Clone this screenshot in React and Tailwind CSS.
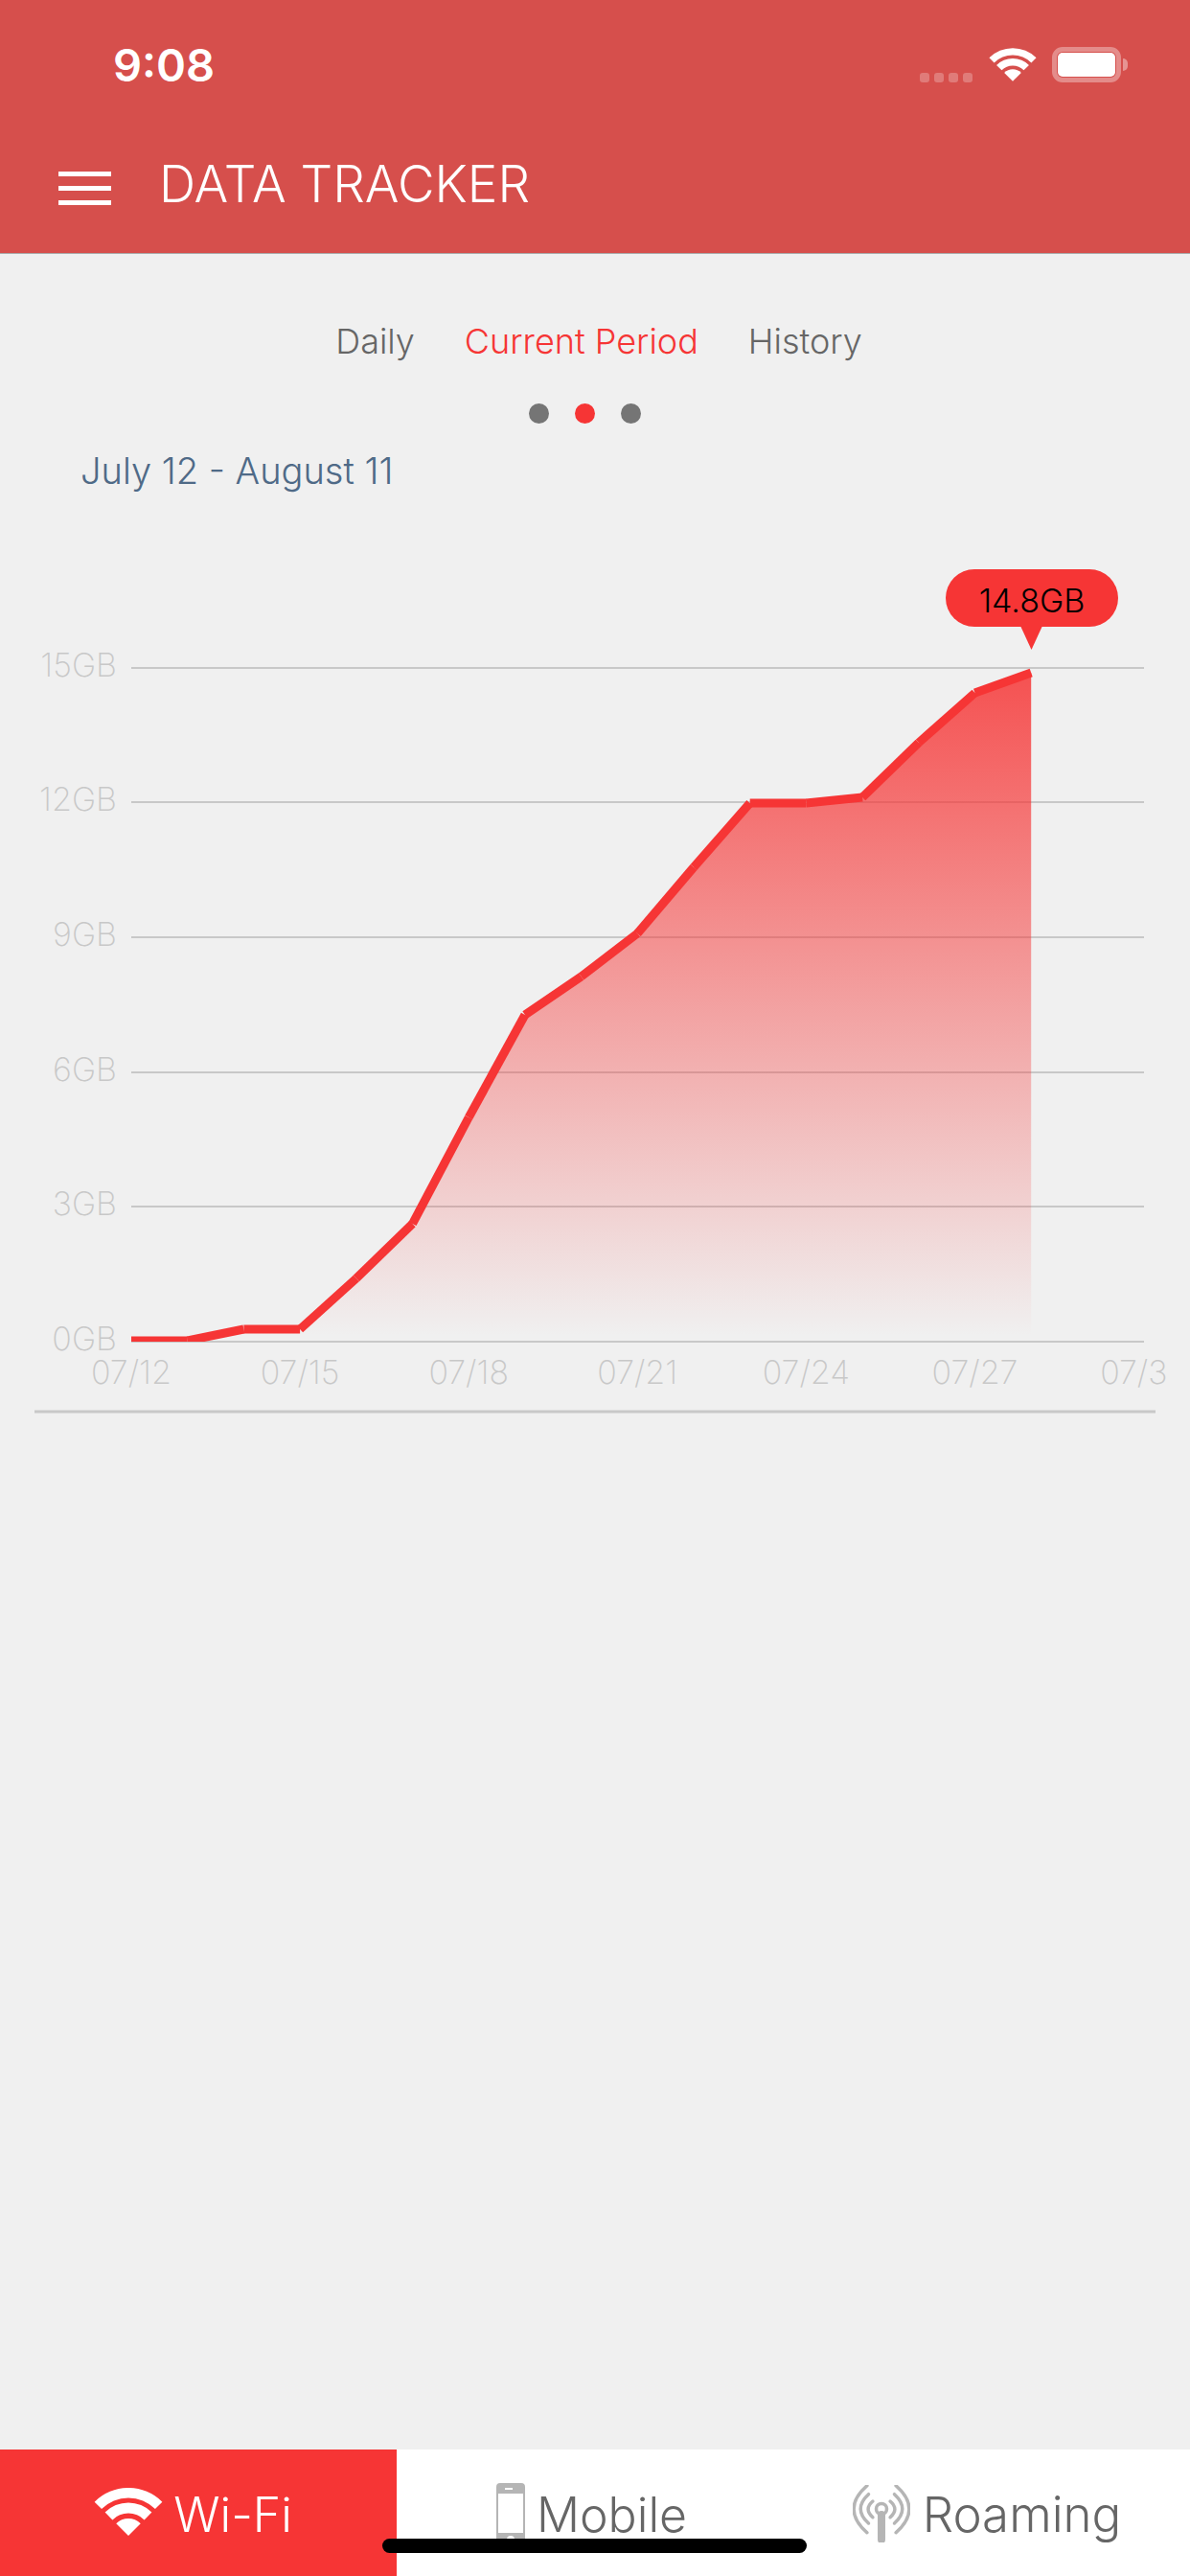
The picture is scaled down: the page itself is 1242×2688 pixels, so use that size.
import React from 'react';

const DAY = 58.7;
const X0 = 137;
const usage = [1400, 1400, 1388, 1388, 1335, 1278, 1167, 1060, 1020, 975, 906, 839, 839, 833, 776, 724, 703];
const points = usage.map((y, i) => [X0 + DAY * i, y]);
const line = points.map(([x, y]) => `${x},${y}`).join(' ');
const area = `${line} ${points[16][0]},1401 ${X0},1401`;

const yTicks = [
  { label: '15GB', y: 698 },
  { label: '12GB', y: 838 },
  { label: '9GB', y: 979 },
  { label: '6GB', y: 1120 },
  { label: '3GB', y: 1260 },
  { label: '0GB', y: 1401 },
];
const xTicks = ['07/12', '07/15', '07/18', '07/21', '07/24', '07/27', '07/30'];

const font = { fontFamily: 'Inter' };

function UsageChart() {
  return (
    <svg viewBox="0 560 1242 930" className="block w-full h-[930px]">
      <defs>
        <linearGradient id="fill" x1="0" y1="702" x2="0" y2="1395" gradientUnits="userSpaceOnUse">
          <stop offset="0" stopColor="#f63535" stopOpacity="0.85" />
          <stop offset="1" stopColor="#f63535" stopOpacity="0" />
        </linearGradient>
        <clipPath id="axis">
          <rect x="0" y="1400" width="1217" height="60" />
        </clipPath>
        <clipPath id="plot">
          <rect x="137" y="600" width="1057" height="801" />
        </clipPath>
      </defs>
      {yTicks.map((t) => (
        <g key={t.label}>
          <line x1={137} x2={1194} y1={t.y} y2={t.y} stroke="#c8c8c8" strokeWidth="2" />
          <text x={122} y={t.y + 9} textAnchor="end" fontSize="34" fontWeight="200" fill="#c8c8c8" style={font}>{t.label}</text>
        </g>
      ))}
      <g clipPath="url(#axis)">
        {xTicks.map((t, i) => (
          <text key={t} x={X0 + DAY * 3 * i} y={1445} textAnchor="middle" fontSize="34" fontWeight="200" fill="#c8c8c8" style={font}>{t}</text>
        ))}
      </g>
      <polygon points={area} fill="url(#fill)" />
      {/* each day is its own segment, so the corners stay unjoined */}
      <g clipPath="url(#plot)">
        {points.slice(1).map(([x, y], i) => (
          <line key={x} x1={points[i][0]} y1={points[i][1]} x2={x} y2={y} stroke="#f63535" strokeWidth="9" />
        ))}
      </g>
      <rect x="987" y="595" width="180" height="60" rx="30" fill="#f63535" />
      <polygon points="1065,654 1088,654 1076.5,679" fill="#f63535" />
      <text x="1077" y="640" textAnchor="middle" fontSize="34" fontWeight="300" fill="#000" style={font}>14.8GB</text>
      <line x1={36} x2={1206} y1={1474} y2={1474} stroke="#c8c8c8" strokeWidth="3" />
    </svg>
  );
}

function WifiIcon({ className }) {
  return (
    <svg viewBox="0 0 72 50" className={className} fill="currentColor">
      <path d="M0.64 14.64 A50 50 0 0 1 71.36 14.64 L63.93 22.07 A39.5 39.5 0 0 0 8.07 22.07 Z" />
      <path d="M11.6 25.6 A34.5 34.5 0 0 1 60.4 25.6 L52.6 33.4 A23.5 23.5 0 0 0 19.4 33.4 Z" />
      <path d="M23.27 37.27 A18 18 0 0 1 48.73 37.27 L36 50 Z" />
    </svg>
  );
}

function PhoneIcon() {
  return (
    <svg viewBox="0 0 30 70" className="w-[30px] h-[70px] text-[#b5b5b5]">
      <path fill="currentColor" fillRule="evenodd" d="M4 0 H26 A4 4 0 0 1 30 4 V66 A4 4 0 0 1 26 70 H4 A4 4 0 0 1 0 66 V4 A4 4 0 0 1 4 0 Z M2 11 V52 H28 V11 Z" />
      <rect x="9" y="5" width="8" height="2" fill="#fff" />
      <circle cx="15" cy="59" r="4" fill="#fff" />
    </svg>
  );
}

function AntennaIcon() {
  return (
    <svg viewBox="0 0 59 60" className="w-[60px] h-[60px] text-[#b5b5b5]" fill="none" stroke="currentColor" strokeWidth="3.5" strokeLinecap="round">
      <circle cx="29.5" cy="25" r="5.5" />
      <path d="M29.5 31 V57" strokeWidth="8" />
      <path d="M20.4 17 Q10.8 25 20.4 33.7 M38.6 17 Q48.2 25 38.6 33.7" />
      <path d="M16 9.7 Q-0.6 25 16 40 M43 9.7 Q59.6 25 43 40" />
      <path d="M14.4 0.8 Q-13.2 25 14.4 49.7 M44.6 0.8 Q72.2 25 44.6 49.7" />
    </svg>
  );
}

export default function App() {
  return (
    <div className="relative flex flex-col h-[2688px] bg-[#f0f0f0] overflow-hidden font-['Inter',sans-serif] font-light">
      {/* status bar and title */}
      <header className="h-[265px] bg-[#d64f4c] border-b border-[#aaa] text-white">
        <div className="flex items-start h-[150px] pt-[44px] pl-[118px] pr-[65px]">
          <span className="text-[47px] font-semibold leading-none">9:08</span>
          <div className="ml-auto flex items-center mt-[5px]">
            <div className="flex gap-[5px] mt-[26px] mr-[17px]">
              <span className="w-[10px] h-[10px] rounded-[3px] bg-white/25" />
              <span className="w-[10px] h-[10px] rounded-[3px] bg-white/25" />
              <span className="w-[10px] h-[10px] rounded-[3px] bg-white/25" />
              <span className="w-[10px] h-[10px] rounded-[3px] bg-white/25" />
            </div>
            <WifiIcon className="w-[50px] h-[35px]" />
            <div className="ml-[16px] w-[72px] h-[37px] rounded-[11px] border-[5px] border-white/35 p-px">
              <div className="w-full h-full rounded-[5px] bg-white" />
            </div>
            <span className="ml-[2px] w-[5px] h-[13px] rounded-r-full bg-white/40" />
          </div>
        </div>
        <div className="flex items-center h-[84px] pl-[61px]">
          <div className="flex flex-col gap-[10px] mt-[9px]">
            <span className="w-[55px] h-[5px] bg-white" />
            <span className="w-[55px] h-[5px] bg-white" />
            <span className="w-[55px] h-[5px] bg-white" />
          </div>
          <h1 className="ml-[50px] text-[53px] leading-[64px] font-light">DATA TRACKER</h1>
        </div>
      </header>

      {/* period tabs */}
      <nav className="flex justify-center gap-[52px] mt-[69px] pl-[8px] text-[36px] leading-[44px] text-[#666]">
        <span>Daily</span>
        <span className="text-[#f63535]">Current Period</span>
        <span>History</span>
      </nav>
      <div className="flex justify-center gap-[27px] mt-[43px] pr-[22px]">
        <span className="w-[21px] h-[21px] rounded-full bg-[#757575]" />
        <span className="w-[21px] h-[21px] rounded-full bg-[#f63535]" />
        <span className="w-[21px] h-[21px] rounded-full bg-[#757575]" />
      </div>
      <p className="mt-[26px] ml-[84px] text-[38px] leading-[46px] text-[#4f6a87]">July 12 - August 11</p>

      <div className="mt-[45px]">
        <UsageChart />
      </div>

      {/* network tabs */}
      <div className="mt-auto grid grid-cols-3 h-[132px] bg-white text-[50px] leading-[60px] text-[#666]">
        <div className="flex justify-center items-start gap-[11px] pt-[38px] pr-[11px] bg-[#f63535] text-white">
          <WifiIcon className="w-[72px] h-[50px] mt-[2px]" />
          <span>Wi-Fi</span>
        </div>
        <div className="flex justify-center items-start gap-[12px] pt-[35px] pr-[7px]">
          <PhoneIcon />
          <span className="mt-[3px]">Mobile</span>
        </div>
        <div className="flex justify-center items-start gap-[13px] pt-[37px] pr-[10px]">
          <AntennaIcon />
          <span className="mt-[1px] text-[51px]">Roaming</span>
        </div>
      </div>
      <div className="absolute left-[399px] top-[2649px] w-[443px] h-[15px] rounded-full bg-black" />
    </div>
  );
}
